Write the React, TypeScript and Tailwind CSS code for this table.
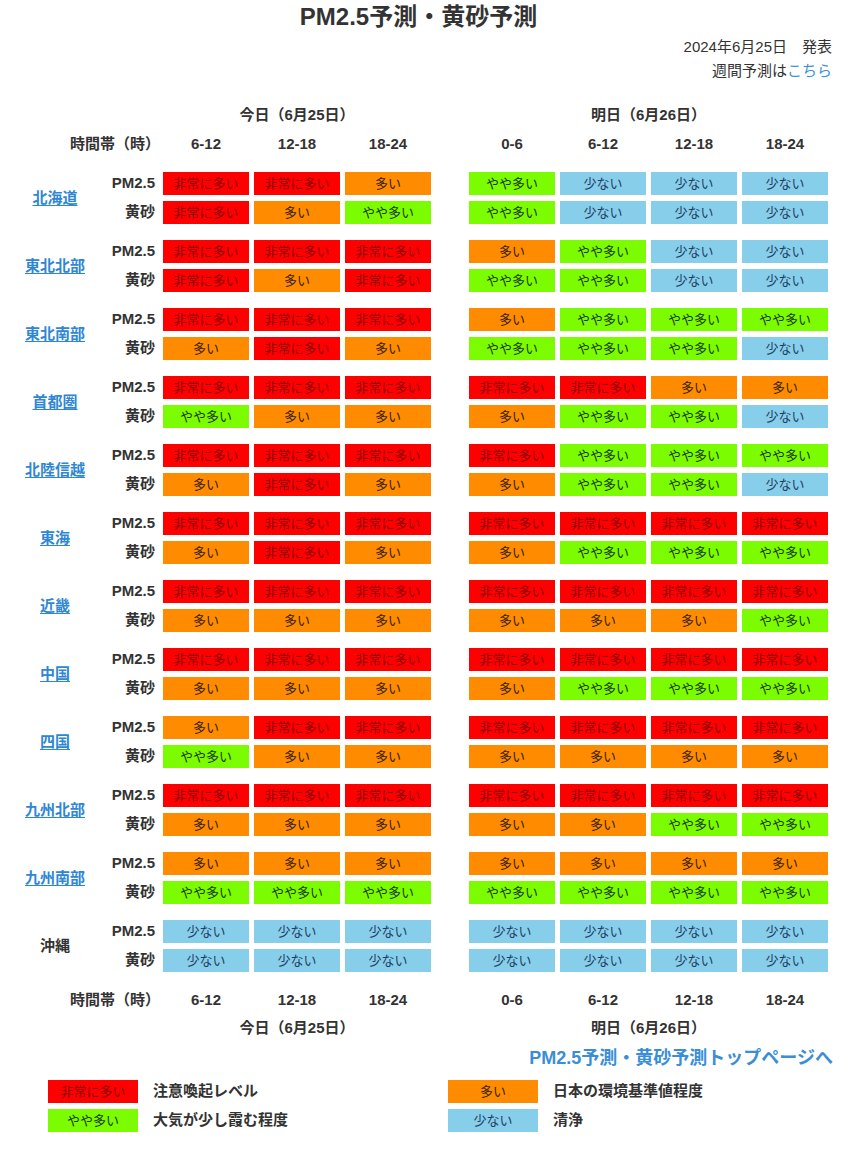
import React from "react";

type L = "R" | "O" | "G" | "B";

const CELL: Record<L, { bg: string; fg: string; t: string }> = {
  R: { bg: "bg-[#ff0000]", fg: "text-[#8e0000]", t: "非常に多い" },
  O: { bg: "bg-[#ff8c00]", fg: "text-[#3a2200]", t: "多い" },
  G: { bg: "bg-[#7cfc00]", fg: "text-[#1c3a00]", t: "やや多い" },
  B: { bg: "bg-[#87ceeb]", fg: "text-[#1f3f62]", t: "少ない" },
};

const regions: { name: string; link: boolean; pm: string; ks: string }[] = [
  { name: "北海道", link: true, pm: "RRO GBBB", ks: "ROG GBBB" },
  { name: "東北北部", link: true, pm: "RRR OGBB", ks: "ROR GGBB" },
  { name: "東北南部", link: true, pm: "RRR OGGG", ks: "ORO GGGB" },
  { name: "首都圏", link: true, pm: "RRR RROO", ks: "GOO OGGB" },
  { name: "北陸信越", link: true, pm: "RRR RGGG", ks: "ORO OGGB" },
  { name: "東海", link: true, pm: "RRR RRRR", ks: "ORO OGGG" },
  { name: "近畿", link: true, pm: "RRR RRRR", ks: "OOO OOOG" },
  { name: "中国", link: true, pm: "RRR RRRR", ks: "OOO OGGG" },
  { name: "四国", link: true, pm: "ORR RRRR", ks: "GOO OOOO" },
  { name: "九州北部", link: true, pm: "RRR RRRR", ks: "OOO OOGG" },
  { name: "九州南部", link: true, pm: "OOO OOOO", ks: "GGG GGGG" },
  { name: "沖縄", link: false, pm: "BBB BBBB", ks: "BBB BBBB" },
];

const font = {
  fontFamily: '"Liberation Sans", "Noto Sans CJK JP", sans-serif',
};

function Cell({ l }: { l: L }) {
  const c = CELL[l];
  return (
    <div
      className={`w-[86px] h-[23px] flex items-center justify-center text-[13px] leading-none ${c.bg} ${c.fg}`}
    >
      {c.t}
    </div>
  );
}

function Cells({ s }: { s: string }) {
  const [a, b] = s.split(" ");
  return (
    <div className="flex">
      <div className="flex gap-[5px]">
        {a.split("").map((x, i) => (
          <Cell key={i} l={x as L} />
        ))}
      </div>
      <div className="flex gap-[5px] ml-[38px]">
        {b.split("").map((x, i) => (
          <Cell key={i} l={x as L} />
        ))}
      </div>
    </div>
  );
}

function TimeHeader() {
  const left = ["6-12", "12-18", "18-24"];
  const right = ["0-6", "6-12", "12-18", "18-24"];
  return (
    <div className="flex items-center h-[20px] font-bold text-[15px]">
      <div className="w-[143px] text-right pr-[3px]">時間帯（時）</div>
      <div className="flex gap-[5px]">
        {left.map((t) => (
          <div key={t} className="w-[86px] text-center">
            {t}
          </div>
        ))}
      </div>
      <div className="flex gap-[5px] ml-[38px]">
        {right.map((t) => (
          <div key={t} className="w-[86px] text-center">
            {t}
          </div>
        ))}
      </div>
    </div>
  );
}

function DayHeader() {
  return (
    <div className="flex items-center h-[20px] font-bold text-[15px]">
      <div className="w-[143px]" />
      <div className="w-[268px] text-center">今日（6月25日）</div>
      <div className="w-[359px] ml-[38px] text-center">明日（6月26日）</div>
    </div>
  );
}

function LegendBox({ l }: { l: L }) {
  const c = CELL[l];
  return (
    <div
      className={`w-[90px] h-[23px] flex items-center justify-center text-[13px] leading-none ${c.bg} ${c.fg}`}
    >
      {c.t}
    </div>
  );
}

export default function App() {
  return (
    <div className="w-[861px] min-h-[1151px] bg-white text-[#333]" style={font}>
      <div className="pt-[3px] text-center text-[24px] leading-[28px] font-bold text-[#333] pr-[24px]">
        PM2.5予測・黄砂予測
      </div>
      <div className="mt-[6px] pr-[29px] text-right text-[15px] leading-[20px] flex flex-col gap-[4px]">
        <div>2024年6月25日　発表</div>
        <div>
          週間予測は<a className="text-[#3d8fd6]">こちら</a>
        </div>
      </div>

      <div className="pl-[20px]">
        <div className="mt-[24px]">
          <DayHeader />
        </div>
        <div className="mt-[9px]">
          <TimeHeader />
        </div>

        <div className="mt-[18px] flex flex-col gap-[16px]">
          {regions.map((r) => (
            <div key={r.name} className="flex items-center">
              <div className="w-[70px] text-center text-[15px] font-bold">
                {r.link ? (
                  <a className="text-[#2f87d4] underline underline-offset-2">{r.name}</a>
                ) : (
                  <span className="text-[#333]">{r.name}</span>
                )}
              </div>
              <div className="flex flex-col gap-[6px]">
                <div className="flex items-center">
                  <div className="w-[65px] text-right text-[15px] font-bold mr-[8px]">PM2.5</div>
                  <Cells s={r.pm} />
                </div>
                <div className="flex items-center">
                  <div className="w-[65px] text-right text-[15px] font-bold mr-[8px]">黄砂</div>
                  <Cells s={r.ks} />
                </div>
              </div>
            </div>
          ))}
        </div>

        <div className="mt-[18px]">
          <TimeHeader />
        </div>
        <div className="mt-[8px]">
          <DayHeader />
        </div>
      </div>

      <div className="mt-[8px] pr-[28px] text-right text-[18px] leading-[24px] font-bold">
        <a className="text-[#3a8ed6]">PM2.5予測・黄砂予測トップページへ</a>
      </div>

      <div className="mt-[10px] flex flex-col gap-[6px]">
        {[
          ["R", "注意喚起レベル", "O", "日本の環境基準値程度"],
          ["G", "大気が少し霞む程度", "B", "清浄"],
        ].map((row, i) => (
          <div key={i} className="flex items-center">
            <div className="ml-[48px] w-[400px] flex items-center">
              <LegendBox l={row[0] as L} />
              <div className="ml-[15px] text-[15px] font-bold">{row[1]}</div>
            </div>
            <div className="flex items-center">
              <LegendBox l={row[2] as L} />
              <div className="ml-[15px] text-[15px] font-bold">{row[3]}</div>
            </div>
          </div>
        ))}
      </div>
    </div>
  );
}
